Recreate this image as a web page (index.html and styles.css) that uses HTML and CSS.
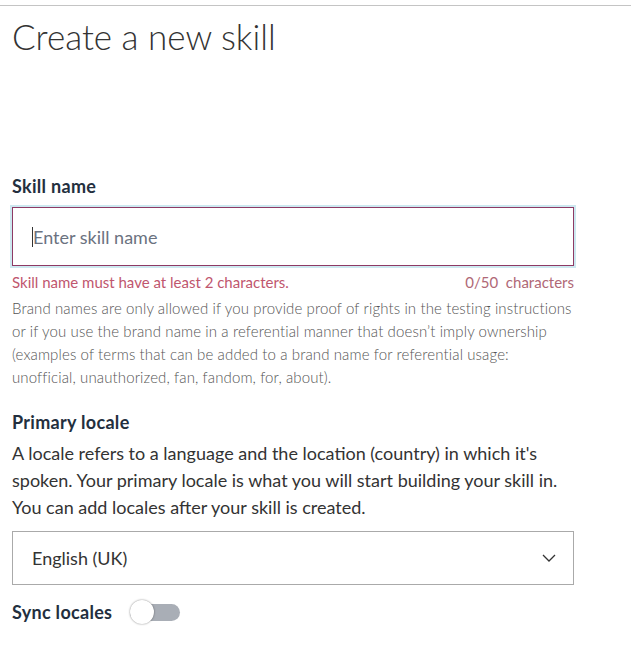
FILE: index.html
```html
<!DOCTYPE html>
<html>
<head>
<meta charset="utf-8">
<link rel="stylesheet" href="styles.css">
</head>
<body>
<div class="topline"></div>
<main class="page">
  <h1 class="title">Create a new skill</h1>
  <section class="field">
    <label class="label">Skill name</label>
    <div class="input-ring">
      <div class="input"><span class="caret"></span><span class="placeholder">Enter skill name</span></div>
    </div>
    <div class="meta">
      <span class="error">Skill name must have at least 2 characters.</span>
      <span class="count">0/50&nbsp; characters</span>
    </div>
    <p class="hint">Brand names are only allowed if you provide proof of rights in the testing instructions or if you use the brand name in a referential manner that doesn’t imply ownership (examples of terms that can be added to a brand name for referential usage: unofficial, unauthorized, fan, fandom, for, about).</p>
  </section>
  <section class="field locale">
    <label class="label">Primary locale</label>
    <p class="desc">A locale refers to a language and the location (country) in which it's spoken. Your primary locale is what you will start building your skill in. You can add locales after your skill is created.</p>
    <div class="select">
      <span>English (UK)</span>
      <svg class="chev" width="14" height="8" viewBox="0 0 14 8"><path d="M1 1 L7 7 L13 1" fill="none" stroke="#333" stroke-width="1.3"/></svg>
    </div>
    <div class="sync">
      <span class="label">Sync locales</span>
      <span class="toggle"><span class="knob"></span></span>
    </div>
    <p class="desc">Sync will keep the models for your primary locale and any other locales in sync with each other.</p>
  </section>
</main>
</body>
</html>
```
FILE: styles.css
```css
html, body { margin: 0; padding: 0; background: #fff; }
body { font-family: Lato, "Open Sans", "Liberation Sans", sans-serif; color: #333; }
.topline { height: 1px; background: #c4c4c4; margin-top: 5px; }
.page { padding: 0 12px; width: 562px; }
.title { font-weight: 300; font-size: 35px; margin: 10px 0 0; color: #333; line-height: 40px; }
.field { display: flex; flex-direction: column; }
.label { font-weight: 700; font-size: 18px; letter-spacing: 0.3px; color: #232f3e; line-height: 22px; }
.field > .label { margin-top: 119px; margin-bottom: 8px; }
.input-ring { margin: 0 -2px; border: 2px solid #cde8f0; }
.input { height: 57px; border: 1px solid #8e3a64; display: flex; align-items: center; padding-left: 19px; }
.caret { width: 1px; height: 20px; background: #333; }
.placeholder { font-size: 18px; color: #6b7280; }
.meta { display: flex; justify-content: space-between; font-size: 15px; color: #c0566e; margin-top: 4px; line-height: 20px; }
.count { color: #b06876; }
.hint { font-size: 15px; font-weight: 300; letter-spacing: 0.12px; color: #555; line-height: 23px; margin: 5px 0 0; }
.locale > .label { margin-top: 22px; margin-bottom: 7px; }
.desc { font-size: 18px; line-height: 27px; margin: 0; color: #333; }
.select { margin-top: 10px; height: 52px; border: 1px solid #aaa; display: flex; align-items: center; justify-content: space-between; padding: 0 17px 0 19px; font-size: 18px; }
.sync { display: flex; align-items: center; gap: 18px; margin-top: 13px; height: 28px; }
.toggle { width: 50px; height: 17px; border-radius: 9px; background: #a9aeb6; position: relative; }
.knob { position: absolute; left: 0; top: -4px; width: 24px; height: 24px; border-radius: 50%; background: #fff; box-shadow: 0 0 2px rgba(0,0,0,0.5); }
.sync + .desc { margin-top: 22px; color: #999; }
```
